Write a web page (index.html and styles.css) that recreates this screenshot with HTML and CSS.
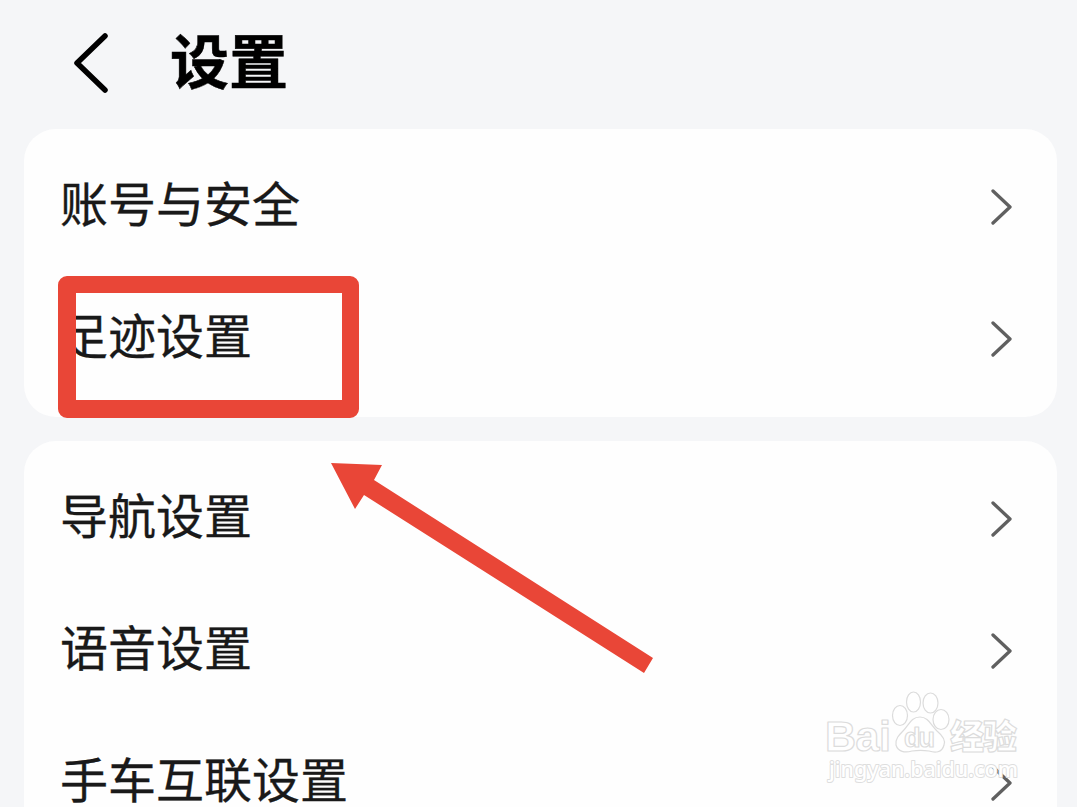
FILE: index.html
```html
<!DOCTYPE html>
<html lang="zh-CN">
<head>
  <meta charset="UTF-8">
  <meta name="viewport" content="width=device-width, initial-scale=1.0">
  <title>设置</title>
  <link rel="stylesheet" href="styles.css">
</head>
<body>
  <header>
    <svg class="back" viewBox="0 0 36 62"><path d="M32 4L4 31L32 58"/></svg>
    <h1>设置</h1>
  </header>

  <div class="card">
    <div class="item">
      <span>账号与安全</span>
      <svg class="arrow" viewBox="0 0 22 36"><path d="M2 2L19 18L2 34"/></svg>
    </div>
    <div class="item">
      <span>足迹设置</span>
      <svg class="arrow" viewBox="0 0 22 36"><path d="M2 2L19 18L2 34"/></svg>
      <div class="highlight"></div>
    </div>
  </div>

  <div class="card">
    <div class="item">
      <span>导航设置</span>
      <svg class="arrow" viewBox="0 0 22 36"><path d="M2 2L19 18L2 34"/></svg>
    </div>
    <div class="item">
      <span>语音设置</span>
      <svg class="arrow" viewBox="0 0 22 36"><path d="M2 2L19 18L2 34"/></svg>
    </div>
    <div class="item">
      <span>手车互联设置</span>
      <svg class="arrow" viewBox="0 0 22 36"><path d="M2 2L19 18L2 34"/></svg>
    </div>
  </div>

  <svg class="pointer" viewBox="0 0 322 212">
    <path d="M0 0L51 2L43 17L322 195L313 210L33 32L24 46Z"/>
  </svg>

  <svg class="watermark" viewBox="0 0 200 100">
    <text class="brand" x="5" y="61" textLength="66">Bai</text>
    <ellipse cx="80" cy="25.500" rx="7.500" ry="10"/>
    <ellipse cx="93.500" cy="12" rx="7" ry="10"/>
    <ellipse cx="110.500" cy="13" rx="7.500" ry="10"/>
    <ellipse cx="121" cy="29.500" rx="8" ry="10"/>
    <path d="M100 27C108 27 111 35 117 41C123 46 126 50 124 55C122 63 115 63 109 61C103 60 98 60 92 61C85 63 78 62 76 55C75 49 79 45 83 41C89 35 91 27 100 27Z"/>
    <text class="du" x="84" y="57" textLength="31">du</text>
    <text class="cn" x="130" y="59" textLength="67">经验</text>
    <text class="url" x="9" y="87" textLength="189" lengthAdjust="spacingAndGlyphs">jingyan.baidu.com</text>
  </svg>
</body>
</html>
```
FILE: styles.css
```css
* {
  box-sizing: border-box;
}
body {
  margin: 0;
  height: 807px;
  overflow: hidden;
  position: relative;
  background-color: #f5f6f8;
  color: #191919;
  font-family: "Noto Sans CJK SC", sans-serif;
}
svg {
  display: block;
}
header {
  display: flex;
  align-items: center;
  height: 129px;
  padding: 0 0 3px 73px;
}
header h1 {
  margin: -8px 0 0 61px;
  font-size: 59px;
  line-height: 80px;
  font-weight: 700;
  color: #000;
  -webkit-text-stroke: 0.5px #000;
}
.back {
  width: 36px;
  height: 62px;
  fill: none;
  stroke: #000;
  stroke-width: 5.5;
  stroke-linecap: round;
  stroke-linejoin: round;
}
.card {
  margin: 0 20px 24px 24px;
  padding: 12px 44px 12px 36px;
  background-color: #fefefe;
  border-radius: 32px;
}
.item {
  position: relative;
  display: flex;
  align-items: center;
  justify-content: space-between;
  height: 132px;
  font-size: 48px;
  line-height: 70px;
}
.item span {
  margin-top: -12px;
  -webkit-text-stroke: 0.3px #191919;
}
.arrow {
  width: 22px;
  height: 36px;
  fill: none;
  stroke: #606060;
  stroke-width: 3.3;
  stroke-linecap: round;
  stroke-linejoin: round;
}
.highlight {
  position: absolute;
  left: -2px;
  top: 3px;
  width: 301px;
  height: 142px;
  border: 17px solid #e94637;
  border-bottom-width: 18px;
  border-left-width: 18px;
  border-radius: 9px;
}
.pointer {
  position: absolute;
  left: 331px;
  top: 463px;
  width: 322px;
  height: 212px;
  fill: #e94637;
}
.watermark {
  position: absolute;
  left: 820px;
  top: 690px;
  width: 200px;
  height: 100px;
  fill: #fff;
  stroke: #dcdcdc;
  stroke-width: 1.2;
  stroke-linejoin: round;
}
.brand {
  font: 700 43px "Liberation Sans", sans-serif;
}
.du {
  font: 700 27px "Liberation Sans", sans-serif;
}
.cn {
  font: 900 34px "Noto Sans CJK SC", sans-serif;
}
.url {
  font: 500 22px "Noto Sans", sans-serif;
  stroke: #dedede;
  stroke-width: 2;
  paint-order: stroke;
}
```
